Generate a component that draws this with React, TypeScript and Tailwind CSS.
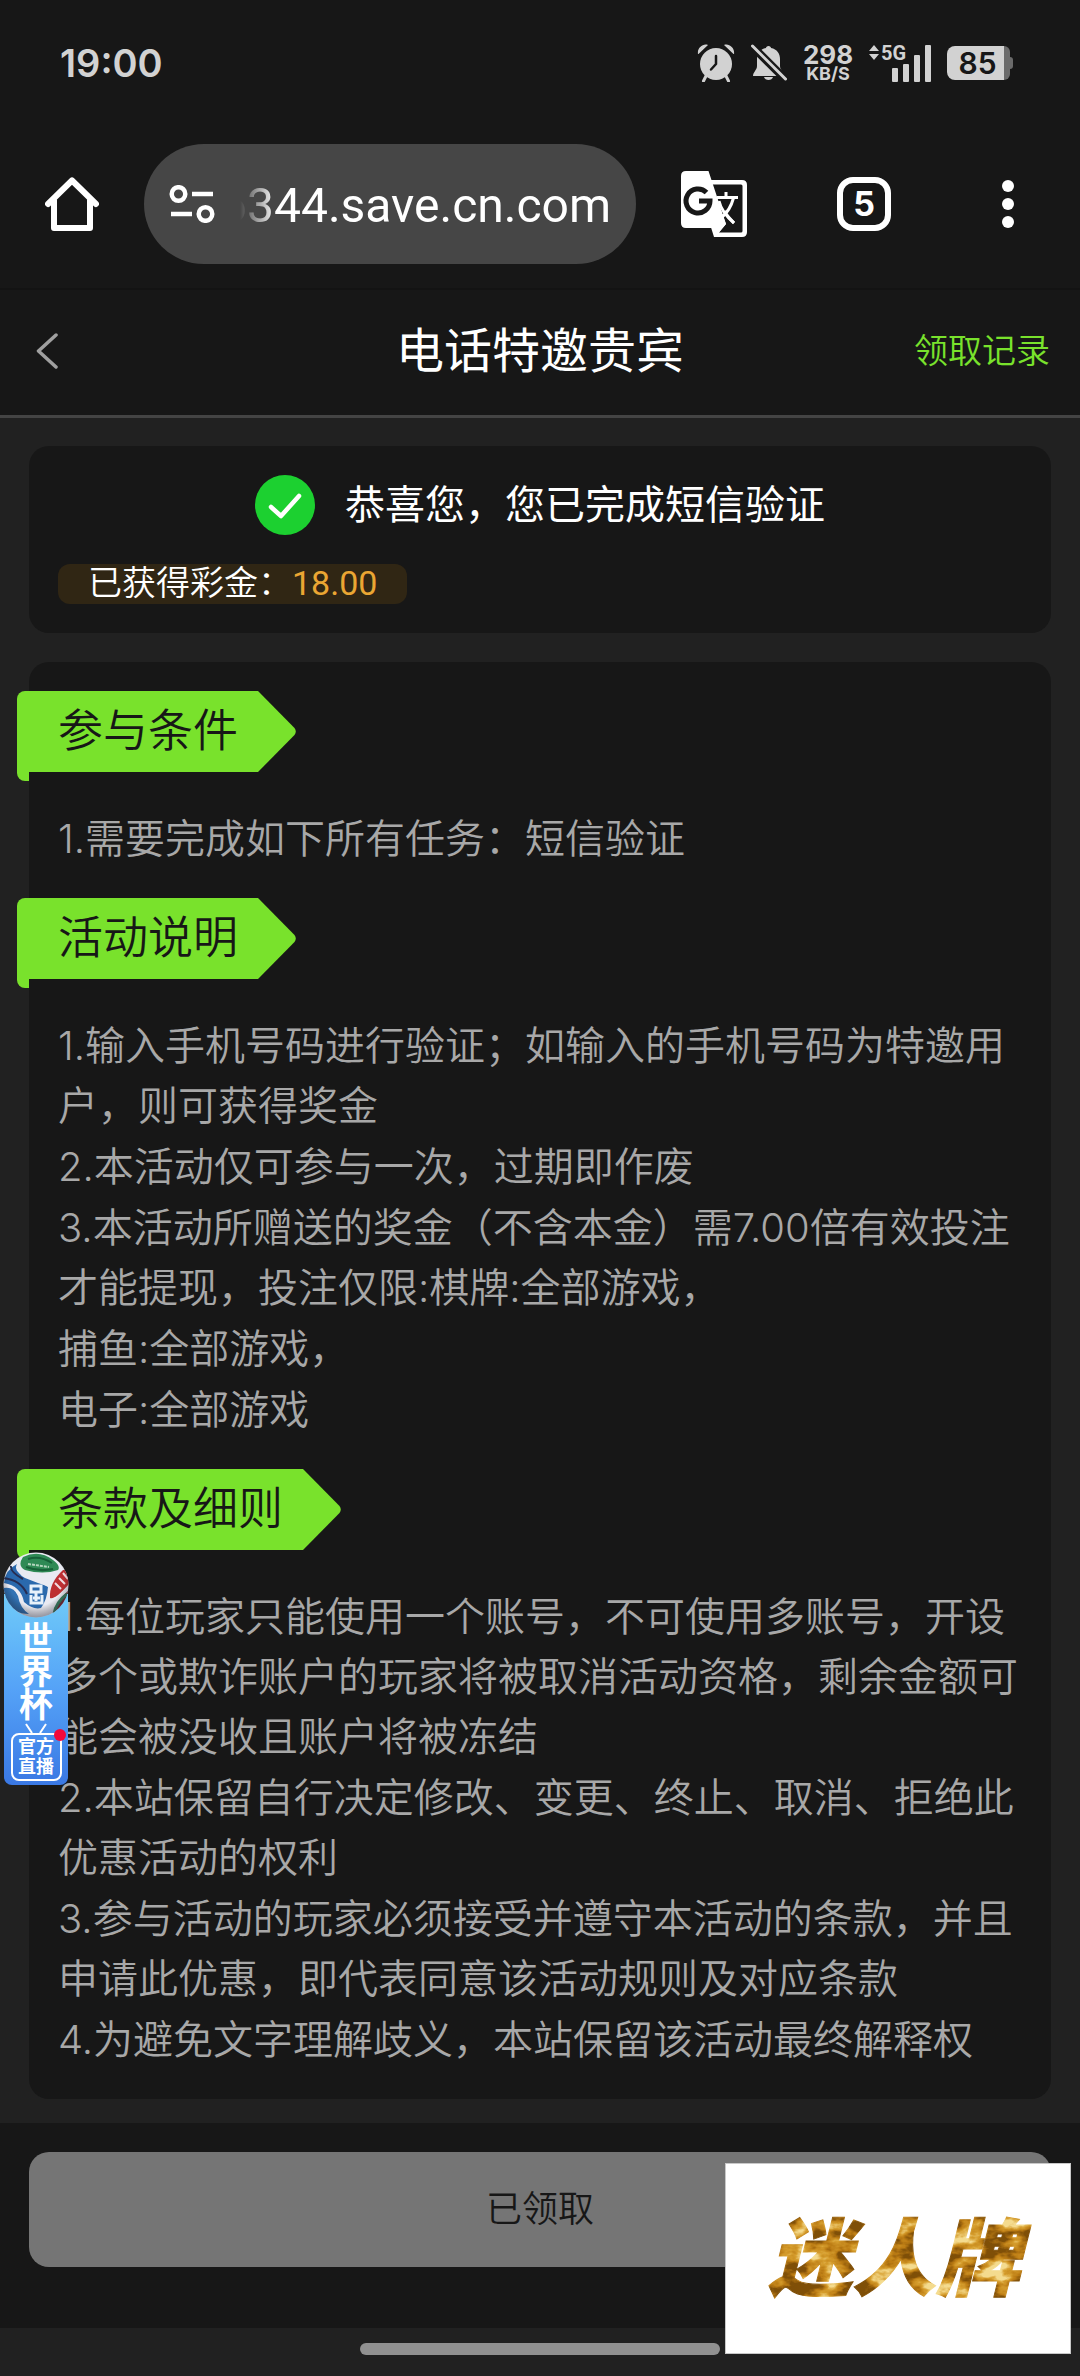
import { useState } from 'react';

interface Section {
  title: string;
  items: string[];
}

const SECTIONS: Section[] = [
  {
    title: '参与条件',
    items: ['1.需要完成如下所有任务：短信验证'],
  },
  {
    title: '活动说明',
    items: [
      '1.输入手机号码进行验证；如输入的手机号码为特邀用户，则可获得奖金',
      '2.本活动仅可参与一次，过期即作废',
      '3.本活动所赠送的奖金（不含本金）需7.00倍有效投注才能提现，投注仅限:棋牌:全部游戏，',
      '捕鱼:全部游戏，',
      '电子:全部游戏',
    ],
  },
  {
    title: '条款及细则',
    items: [
      '1.每位玩家只能使用一个账号，不可使用多账号，开设多个或欺诈账户的玩家将被取消活动资格，剩余金额可能会被没收且账户将被冻结',
      '2.本站保留自行决定修改、变更、终止、取消、拒绝此优惠活动的权利',
      '3.参与活动的玩家必须接受并遵守本活动的条款，并且申请此优惠，即代表同意该活动规则及对应条款',
      '4.为避免文字理解歧义，本站保留该活动最终解释权',
    ],
  },
];

function AlarmIcon() {
  return (
    <svg width="38" height="38" viewBox="0 0 38 38" fill="#d2d2d2" aria-hidden="true">
      <circle cx="19" cy="20" r="16" />
      <path d="M1 10C0 4 6-1 11 1L1.500 10Z M37 10C38 4 32-1 27 1L36.500 10Z" />
      <path d="M9 32L6.500 37M29 32L31.500 37" stroke="#d2d2d2" strokeWidth="3" strokeLinecap="round" />
      <path d="M19 12V20L14 25.500" fill="none" stroke="#171717" strokeWidth="2.500" strokeLinecap="round" strokeLinejoin="round" />
    </svg>
  );
}

function BellOffIcon() {
  return (
    <svg width="36" height="38" viewBox="0 0 36 38" fill="#d2d2d2" aria-hidden="true">
      <path d="M17.500 2C19 2 20 3 20 4C26 5 29 10 29 15V22C29 26 33 28 33 32H2C2 28 6 26 6 22V15C6 10 9 5 15 4C15 3 16 2 17.500 2Z" />
      <path d="M13 33H22C21 37 14 37 13 33Z" />
      <path d="M1.500 2.500L34 35" stroke="#171717" strokeWidth="8" />
      <path d="M1.500 2L34.500 35" stroke="#d2d2d2" strokeWidth="3" strokeLinecap="round" />
    </svg>
  );
}

function SignalIcon() {
  return (
    <svg width="62" height="38" viewBox="0 0 62 38" fill="#d2d2d2" className="overflow-visible" aria-label="5G">
      <path d="M5 1L10 7H0Z M5 16L0 10H10Z" />
      <text x="12" y="16" fontSize="20" fontWeight="700" className="font-['Roboto',sans-serif]">5G</text>
      <rect x="23" y="24" width="6" height="14" rx="1" />
      <rect x="34" y="20" width="6" height="18" rx="1" />
      <rect x="45" y="11" width="6" height="27" rx="1" />
      <rect x="56" y="1" width="6" height="37" rx="1" />
    </svg>
  );
}

function StatusBar() {
  return (
    <div className="flex h-[84px] items-center justify-between pt-[42px] pr-[67px] pl-[60px] font-['Inter',sans-serif] text-[#d2d2d2]">
      <span className="text-[38px] leading-none font-semibold">19:00</span>
      <div className="flex items-center gap-4">
        <AlarmIcon />
        <BellOffIcon />
        <div className="flex w-[50px] flex-col items-center font-bold">
          <span className="text-[26px] leading-[22px]">298</span>
          <span className="text-[18px] leading-4">KB/S</span>
        </div>
        <SignalIcon />
        <div className="flex items-center">
          <div className="flex h-[34px] w-[57px] items-center justify-center rounded-l-lg bg-[#d2d2d2] pl-1 text-[30px] leading-none font-semibold text-[#171717]">85</div>
          <div className="h-[34px] w-1.5 rounded-r-lg bg-[#6b6b6b]" />
          <div className="h-3 w-[3px] rounded-r-full bg-[#6b6b6b]" />
        </div>
      </div>
    </div>
  );
}

function TranslateIcon() {
  return (
    <svg width="66" height="66" viewBox="0 0 66 66" aria-hidden="true">
      <path d="M28 9H61Q66 9 66 14V61Q66 66 61 66H33L28 50Z" fill="#fff" />
      <path d="M31 13.500H60Q61.500 13.500 61.500 15V60Q61.500 61.500 60 61.500H38L45 53L31 16Z" fill="#171717" />
      <g fill="none" stroke="#fff" strokeWidth="3">
        <path d="M36 26.500H57M45 21V26M52.500 27C50 36 46 42 41 46M39 32C41 39 46 45 53 52" />
      </g>
      <path d="M5 0H27.500L45 53L34 66L31 57H5Q0 57 0 52V5Q0 0 5 0Z" fill="#fff" />
      <path d="M25.500 21.500A12 12 0 1 0 29 30H18" fill="none" stroke="#171717" strokeWidth="5" />
      <path d="M37 30L42 43Q46 37 48 30Z" fill="#171717" />
      <path d="M38 30C40 39 46 46 53 52" fill="none" stroke="#fff" strokeWidth="3" />
    </svg>
  );
}

function BrowserBar() {
  const [url, setUrl] = useState('6344.save.cn.com');

  return (
    <div className="flex items-center border-b-2 border-[#131313] pt-[60px] pr-[66px] pb-6 pl-[45px]">
      <button type="button" aria-label="主页">
        <svg width="54" height="54" viewBox="0 0 54 54" fill="none" stroke="#fff" strokeWidth="6" strokeLinecap="round" strokeLinejoin="round" aria-hidden="true">
          <path d="M3 27L27 3.500L51 27M9 23V51H45V23" />
        </svg>
      </button>
      <div className="mx-[45px] flex h-[120px] min-w-0 flex-1 items-center gap-[5px] rounded-full bg-[#464646] px-[25px]">
        <svg className="shrink-0" width="46" height="38" viewBox="0 0 46 38" fill="none" stroke="#fff" strokeWidth="4.500" aria-hidden="true">
          <circle cx="9.500" cy="9" r="6.800" />
          <circle cx="36.500" cy="29" r="6.800" />
          <path d="M23 9H44M2 29H23" />
        </svg>
        <input
          type="text"
          aria-label="网址"
          value={url}
          onChange={(e) => setUrl(e.target.value)}
          className="w-full min-w-0 bg-transparent pt-1 text-right font-['Roboto',sans-serif] text-[48px] text-white outline-none [mask-image:linear-gradient(to_right,transparent_20px,black_56px)]"
        />
      </div>
      <button type="button" aria-label="翻译">
        <TranslateIcon />
      </button>
      <button type="button" className="mr-[111px] ml-[90px] flex size-[54px] items-center justify-center rounded-2xl border-[6px] border-white font-['Inter',sans-serif] text-[34px] leading-none font-bold">
        5
      </button>
      <button type="button" aria-label="更多">
        <svg width="12" height="50" viewBox="0 0 12 50" fill="#fff" aria-hidden="true">
          <circle cx="6" cy="7" r="6" />
          <circle cx="6" cy="25" r="6" />
          <circle cx="6" cy="43" r="6" />
        </svg>
      </button>
    </div>
  );
}

function SectionTitle({ title }: { title: string }) {
  return (
    <div className="-ml-3">
      <div className="flex">
        <h2 className="flex h-[81px] items-center rounded-tl-lg bg-[#79e22c] pr-5 pb-0.5 pl-[41px] text-[45px] leading-none font-[350] text-[#171717]">{title}</h2>
        <svg width="38" height="81" viewBox="0 0 38 81" fill="#79e22c" aria-hidden="true">
          <path d="M0 0L36.500 37Q39 40.500 36.500 44L0 81Z" />
        </svg>
      </div>
      {/* Fold that hangs over the card edge */}
      <div className="h-[9px] w-3 rounded-bl-lg bg-[#79e22c]" />
    </div>
  );
}

function WorldCupBanner() {
  return (
    <a href="#live" className="absolute top-[1552px] left-[3px] flex w-[66px] flex-col items-center text-white">
      <svg className="relative z-10" width="66" height="66" viewBox="0 0 66 66" aria-hidden="true">
        <defs>
          <clipPath id="ball">
            <circle cx="33" cy="33" r="32.500" />
          </clipPath>
          <radialGradient id="shade" cx="0.500" cy="0.400" r="0.600">
            <stop offset="0.700" stopColor="#000" stopOpacity="0" />
            <stop offset="1" stopColor="#223" stopOpacity="0.450" />
          </radialGradient>
        </defs>
        <g clipPath="url(#ball)">
          <rect width="66" height="66" fill="#e9eaf2" />
          <path d="M20 5Q36-3 50 8Q58 14 55 18Q40 23 22 18Q14 14 20 5Z" fill="#2f8a55" />
          <path d="M25 7Q37 3 49 11M23 15Q36 20 50 17" fill="none" stroke="#176138" strokeWidth="2" />
          <path d="M25 12L46 15" stroke="#b5d6be" strokeWidth="2" strokeDasharray="3 1" />
          <path d="M14 12Q10 19 22 25Q38 31 45 35Q44 48 38 56Q30 58 21 50Q18 34 1 31Q2 18 14 12Z" fill="#2a69ad" />
          <path d="M18 17Q28 25 48 27Q50 28 47 35Q34 31 22 26Q13 21 18 17Z" fill="#e9eaf2" />
          <path d="M0 26Q18 28 24 42M8 14Q7 20 20 27" fill="none" stroke="#272d52" strokeWidth="2" />
          <path d="M0 36Q11 34 15 44Q17 56 26 62Q10 62 3 48Z" fill="#3272b3" />
          <path d="M66 18L60 18Q46 31 47 46Q52 48 66 32Z" fill="#bd2f32" />
          <path d="M52 31L58 37M56 26L62 32M60 21L65 27" stroke="#f1dce0" strokeWidth="2" />
          <path d="M66 38Q52 50 50 62L66 55Z" fill="#7b2c39" />
          <path d="M51 62Q53 50 64 42" fill="none" stroke="#3c8062" strokeWidth="3" />
          <path d="M28 34H38V40H28ZM28 43V51H39V43M33 41V49M30 46H37" fill="none" stroke="#e7f1fa" strokeWidth="3" />
          <rect width="66" height="66" fill="url(#shade)" />
        </g>
      </svg>
      <div className="-mt-6 flex w-16 flex-col items-center rounded-b-lg bg-linear-to-b from-[#70cbf8] via-[#55a2f7] to-[#3a78e4] px-1.5 pt-6 pb-1">
        <span className="mt-1 w-9 text-center text-[34px] leading-[33px] font-bold">世界杯</span>
        <svg width="24" height="12" viewBox="0 0 24 12" fill="none" stroke="#fff" strokeWidth="2" aria-hidden="true">
          <path d="M2 3L8 12M22 3L16 12" />
        </svg>
        <div className="relative flex h-12 w-[51px] items-center justify-center rounded-lg border-2 border-white text-center text-[18px] leading-5 font-bold">
          官方
          <br />
          直播
          <span className="absolute -top-1.5 -right-1.5 size-3 rounded-full bg-[#f3093b]" />
        </div>
      </div>
    </a>
  );
}

function BrandLogo() {
  return (
    <div className="absolute right-[9px] bottom-[22px] border border-[#c8c8c8] bg-white">
      <svg width="344" height="189" viewBox="0 0 344 189" role="img" aria-label="迷人牌">
        <defs>
          <filter id="gold" x="-0.100" y="0" width="1.200" height="1" colorInterpolationFilters="sRGB">
            <feTurbulence type="fractalNoise" baseFrequency="0.035 0.060" numOctaves="4" seed="8" />
            <feColorMatrix values="2.6 0 0 0 -0.9  2.6 0 0 0 -0.9  2.6 0 0 0 -0.9  0 0 0 0 1" />
            <feComponentTransfer result="foil">
              <feFuncR type="table" tableValues="0.50 0.74 0.84 0.96" />
              <feFuncG type="table" tableValues="0.31 0.49 0.62 0.86" />
              <feFuncB type="table" tableValues="0.03 0.08 0.18 0.56" />
            </feComponentTransfer>
            <feComposite in="foil" in2="SourceAlpha" operator="in" />
          </filter>
        </defs>
        <text
          x="168"
          y="125"
          textAnchor="middle"
          fontSize="84"
          fontWeight="900"
          fontStyle="italic"
          stroke="#000"
          strokeWidth="1"
          filter="url(#gold)"
        >
          迷人牌
        </text>
      </svg>
    </div>
  );
}

export default function App() {
  return (
    <div className="relative flex min-h-screen flex-col bg-[#212121] font-['Inter','Noto_Sans_CJK_SC',sans-serif] text-white">
      <header className="bg-[#171717]">
        <StatusBar />
        <BrowserBar />
        <nav className="grid h-32 grid-cols-[1fr_auto_1fr] items-center border-b-[3px] border-[#444] px-[30px] pb-1">
          <button type="button" aria-label="返回" className="justify-self-start pl-1.5">
            <svg width="22" height="36" viewBox="0 0 22 36" fill="none" stroke="#a0a0a0" strokeWidth="3.500" strokeLinecap="round" strokeLinejoin="round" aria-hidden="true">
              <path d="M20 2L2.500 18L20 34" />
            </svg>
          </button>
          <h1 className="text-[48px] leading-none">电话特邀贵宾</h1>
          <a href="#records" className="justify-self-end text-[34px] leading-none font-[350] text-[#79e22c]">领取记录</a>
        </nav>
      </header>

      <main className="flex grow flex-col gap-[29px] px-[29px] pt-7 pb-6">
        <section className="rounded-[20px] bg-[#171717] p-[29px]">
          <div className="flex items-center justify-center gap-[30px]">
            <svg width="60" height="60" viewBox="0 0 60 60" fill="none" aria-hidden="true">
              <circle cx="30" cy="30" r="30" fill="#1cd030" />
              <path d="M16 32L26 41L44 21" stroke="#fff" strokeWidth="4.500" strokeLinecap="round" strokeLinejoin="round" />
            </svg>
            <p className="text-[40px] leading-none">恭喜您，您已完成短信验证</p>
          </div>
          <p className="mt-[29px] inline-flex h-10 items-center rounded-xl bg-[#302614] px-[30px] pb-0.5 align-top text-[34px] leading-none font-[350]">
            已获得彩金：
            <span className="font-['Roboto',sans-serif] font-normal text-[#eba633]">18.00</span>
          </p>
        </section>

        <section className="flex flex-col gap-[29px] rounded-[20px] bg-[#171717] pt-[29px] pb-[29px]">
          {SECTIONS.map((section) => (
            <div key={section.title}>
              <SectionTitle title={section.title} />
              <ul className="mt-7 flex flex-col gap-px px-[29px] text-[40px] leading-[60px] font-[350] text-[#a8a8a8]">
                {section.items.map((item) => (
                  <li key={item}>{item}</li>
                ))}
              </ul>
            </div>
          ))}
        </section>
      </main>

      <div className="bg-[#171717] px-[29px] pt-[29px] pb-[61px]">
        <button type="button" disabled className="block h-[115px] w-full rounded-[20px] bg-[#757575] pb-0.5 text-[36px] font-[350] text-[#171717]">
          已领取
        </button>
      </div>
      <footer className="flex h-12 items-start justify-center pt-[15px]">
        <div className="h-3 w-1/3 rounded-full bg-[#919191]" />
      </footer>

      <WorldCupBanner />
      <BrandLogo />
    </div>
  );
}
